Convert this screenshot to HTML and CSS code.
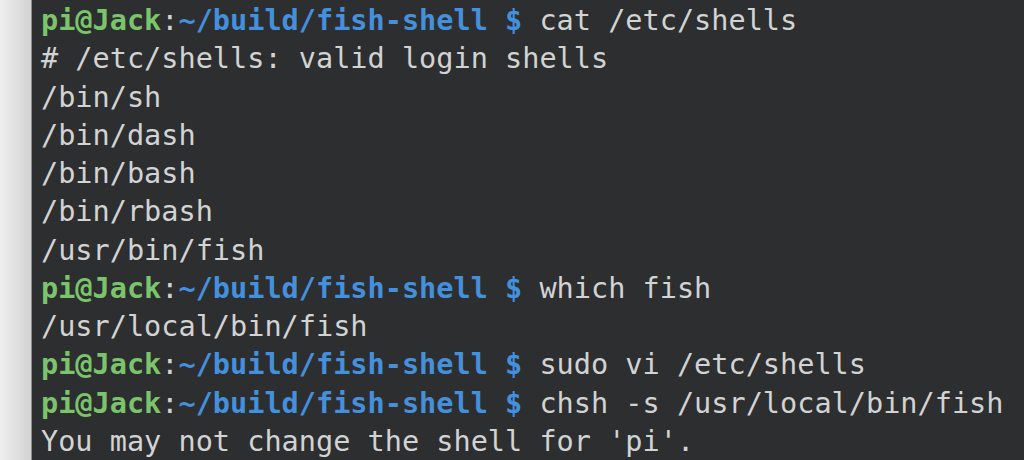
FILE: index.html
```html
<!DOCTYPE html>
<html lang="en">
<head>
<meta charset="utf-8">
<title>Terminal</title>
<link rel="stylesheet" href="styles.css">
</head>
<body>
<div class="window">
  <div class="gutter"></div>
  <pre class="term"><span class="row"><span class="user">pi@Jack</span>:<span class="path">~/build/fish-shell $</span> cat /etc/shells</span>
<span class="row"># /etc/shells: valid login shells</span>
<span class="row">/bin/sh</span>
<span class="row">/bin/dash</span>
<span class="row">/bin/bash</span>
<span class="row">/bin/rbash</span>
<span class="row">/usr/bin/fish</span>
<span class="row"><span class="user">pi@Jack</span>:<span class="path">~/build/fish-shell $</span> which fish</span>
<span class="row">/usr/local/bin/fish</span>
<span class="row"><span class="user">pi@Jack</span>:<span class="path">~/build/fish-shell $</span> sudo vi /etc/shells</span>
<span class="row"><span class="user">pi@Jack</span>:<span class="path">~/build/fish-shell $</span> chsh -s /usr/local/bin/fish</span>
<span class="row">You may not change the shell for 'pi'.</span></pre>
</div>
</body>
</html>
```
FILE: styles.css
```css
html, body {
  margin: 0;
  padding: 0;
  width: 1024px;
  height: 460px;
  overflow: hidden;
  background: #2d2e30;
}

.window {
  display: flex;
  height: 460px;
}

.gutter {
  width: 31px;
  flex: none;
  background: linear-gradient(to right, #efefef, #d2d2d2);
  border-right: 1px solid #8d8d8d;
  box-shadow: 1px 0 0 #151515;
}

.term {
  margin: 0;
  padding: 1px 0 0 9px;
  flex: 1;
  background: #2d2e30;
  color: #d2d3d3;
  font-family: "DejaVu Sans Mono", monospace;
  font-size: 28.55px;
  line-height: 38.25px;
  white-space: pre;
}

.user {
  color: #7bc46c;
  font-weight: bold;
}

.path {
  color: #4590dc;
  font-weight: bold;
}
```
